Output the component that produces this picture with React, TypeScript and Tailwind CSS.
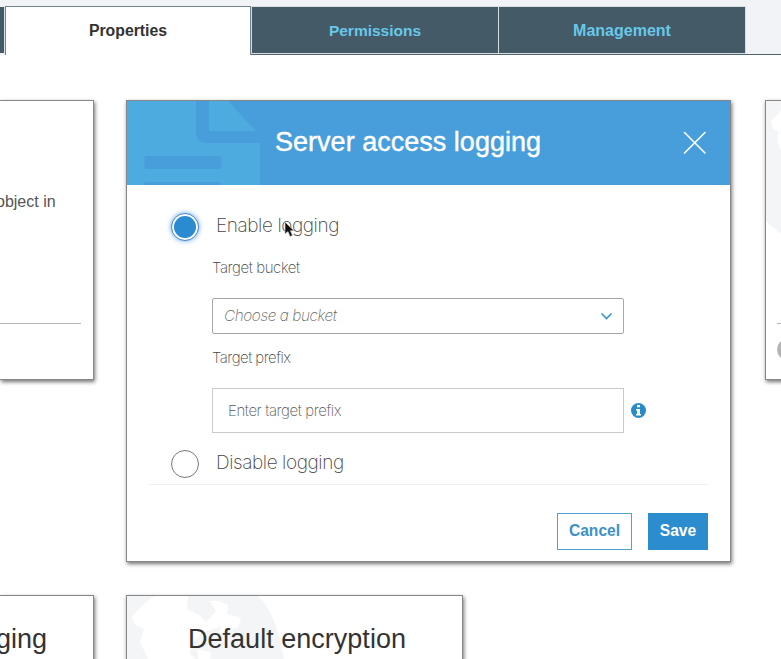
import React from "react";

const cardShadow = "border border-[#858789] bg-white shadow-[1px_2px_4px_rgba(0,0,0,0.55)]";
const thin = "font-['Inter','Liberation_Sans',sans-serif] font-extralight";

function Tabs() {
  return (
    <nav className="flex h-[55px] shrink-0 bg-[#f2f3f6] pt-[6px] text-[17px] font-bold leading-[47px]">
      <div className="mt-px h-[46px] w-[4px] shrink-0 bg-[#455a67]" />
      <div className="h-[49px] w-px shrink-0 bg-[#dce3e7]" />
      <div className="h-[49px] w-[246px] shrink-0 border-x border-t border-[#71838c] bg-white text-center text-[#333]">
        <span className="text-[15.8px]">Properties</span>
      </div>
      <div className="flex grow border-b border-[#53666f]">
        <div className="flex h-[48px] border border-[#d5dde1] bg-[#455a67] text-center text-[#67c8ea]">
          <div className="w-[247px] border-r border-[#d5dde1]">
            <span className="text-[15.5px]">Permissions</span>
          </div>
          <div className="w-[246px]">
            <span className="text-[16px]">Management</span>
          </div>
        </div>
      </div>
    </nav>
  );
}

function Globe({ className }: { className: string }) {
  return (
    <svg className={className} viewBox="0 0 160 170" aria-hidden="true">
      <path d="M0 0H131Q149 15 157 63V170H0Z" fill="#f4f5f7" />
      <path
        d="M28 0Q14 8 5 21L7 28 17 33 13 46 22 65 22 170 44 170 50 145 70 130 86 104 81 80 84 56 70 53 72 66 63 58 65 47 74 38 83 34 95 30 91 37 96 37 111 31 114 22 100 18 101 9 92 5 83 5 89 15 79 26 71 18 60 14 61 0Z"
        fill="white"
      />
      <path d="M131 0Q149 15 157 63L160 63V0Z" fill="white" />
    </svg>
  );
}

function Header() {
  return (
    <header className="relative flex h-[84px] items-center justify-between overflow-hidden bg-[#479eda] pb-[2px] pl-[148px] pr-[24px]">
      <svg className="absolute left-0 top-0" width="133" height="84" viewBox="0 0 133 84" aria-hidden="true">
        <path d="M0 0H69V31Q69 42 80 42H133V84H0Z" fill="#4eabdf" />
        <path d="M82 0H101L129 30H82Z" fill="#4eabdf" />
        <rect x="17.5" y="55" width="77" height="13" rx="2" fill="#479eda" />
        <path d="M17 84V83Q17 81 20 81H91Q94 81 94 83V84Z" fill="#479eda" />
      </svg>
      <h2 className="relative text-[27px] leading-none tracking-[0.02px] text-white [-webkit-text-stroke:0.4px_white]">
        Server access logging
      </h2>
      <svg width="23" height="23" viewBox="0 0 23 23" stroke="white" strokeWidth="1.6" strokeLinecap="round">
        <path d="M1.5 1.5L22 22M22 1.5L1.5 22" />
      </svg>
    </header>
  );
}

function Dialog() {
  return (
    <section className={`${cardShadow} relative h-[462px] w-[605px] shrink-0`}>
      <Header />
      <div className="mx-[22px] flex h-[300px] flex-col border-b border-[#f0f0f0] pl-[22px]">
        <label className="mt-[28px] flex h-[28px] items-center gap-[17px]">
          <span className="grid size-[28px] place-items-center rounded-full border border-[#4486cf] bg-white shadow-[0_0_5px_#69a9ec]">
            <span className="size-[22px] rounded-full bg-[#2a8bd1]" />
          </span>
          <span className={`${thin} -mt-[2px] text-[19px] tracking-[-0.42px] text-[#444]`}>Enable logging</span>
        </label>
        <div className={`${thin} ml-[41px] flex flex-col text-[15px] tracking-[-0.4px] text-[#444]`}>
          <span className="mt-[17px] h-[20px] leading-[20px]">Target bucket</span>
          <div className="mt-[20px] flex h-[36px] w-[412px] items-center justify-between rounded-[2px] border border-[#a4a8ac] pl-[11px] pr-[10px] text-[15.3px] italic text-[#666]">
            <span>Choose a bucket</span>
            <svg width="13" height="9" viewBox="0 0 13 9" fill="none" stroke="#3993cf" strokeWidth="1.6" className="mt-px">
              <path d="M1.5 1.5L6.5 6.5L11.5 1.5" />
            </svg>
          </div>
          <span className="mt-[14px] h-[20px] leading-[20px] tracking-[-0.52px]">Target prefix</span>
          <div className="mt-[20px] flex items-center gap-[7px]">
            <div className="flex h-[45px] w-[412px] items-center border border-[#cacaca] pl-[15px] pt-px text-[15px] text-[#555]">
              Enter target prefix
            </div>
            <svg width="15" height="15" viewBox="0 0 15 15">
              <circle cx="7.5" cy="7.5" r="7.5" fill="#2a8bc9" />
              <path d="M6 2h3v2.3H6zM5 6h4v5h1v1.5H5V11h1V7.5H5z" fill="white" />
            </svg>
          </div>
        </div>
        <label className="mt-[17px] flex h-[28px] items-center gap-[17px]">
          <span className="size-[28px] rounded-full border border-[#777]" />
          <span className={`${thin} -mt-[2px] text-[19px] tracking-[-0.42px] text-[#444]`}>Disable logging</span>
        </label>
      </div>
      <div className="mr-[22px] mt-[28px] flex justify-end gap-[16px] text-[15.6px] font-bold">
        <button className="h-[37px] w-[75px] border border-[#529fd1] pb-px text-[#3c91cb]">Cancel</button>
        <button className="h-[37px] w-[60px] bg-[#2b8dcd] pb-px text-white">Save</button>
      </div>
      <svg className="absolute left-[157px] top-[120px]" width="12" height="17" viewBox="0 0 12 17">
        <path d="M1 1V13L4 10.5L6 15.5L8.5 14.5L6.4 9.7H10Z" fill="#111" stroke="#ddd" strokeWidth=".6" />
      </svg>
    </section>
  );
}

export default function App() {
  return (
    <main className="flex h-[659px] w-[781px] flex-col overflow-hidden bg-white font-['Liberation_Sans',Arial,sans-serif]">
      <Tabs />
      <div className="mt-[45px] flex h-[495px] shrink-0 items-start">
        <section className={`${cardShadow} mr-[32px] h-[280px] w-[94px] shrink-0 border-l-0`}>
          <p className="-ml-[4px] mt-[92px] h-[18px] text-[16px] leading-[18px] text-[#555]">object in</p>
          <div className="mr-[12px] mt-[112px] h-px bg-[#b5b5b5]" />
        </section>
        <Dialog />
        <section className={`${cardShadow} relative ml-[34px] h-[280px] w-[336px] shrink-0 overflow-hidden`}>
          <svg className="h-[170px] w-[160px]" viewBox="0 0 160 170" aria-hidden="true">
            <path d="M0 0H160V170H80Q30 148 0 120Z" fill="#f4f5f7" />
            <path d="M28 0Q14 8 5 21L7 28 17 33 12 32Q10 42 16 51L30 60V0Z" fill="white" />
          </svg>
          <div className="ml-[11px] mt-[52px] h-px bg-[#b5b5b5]" />
          <div className="ml-[11px] mt-[15px] size-[21px] rounded-full bg-[#b4b4b4]" />
        </section>
      </div>
      <div className="flex h-[80px] shrink-0 items-start text-[27px] leading-[32px] text-[#333]">
        <section className={`${cardShadow} mr-[32px] flex h-[280px] w-[94px] shrink-0 justify-end border-l-0 pr-[46px] pt-[27px]`}>
          <span>Logging</span>
        </section>
        <section className={`${cardShadow} relative h-[280px] w-[337px] shrink-0`}>
          <Globe className="absolute left-0 top-0 h-[170px] w-[160px]" />
          <h2 className="relative ml-[61px] mt-[27px] whitespace-nowrap tracking-[0.02px]">Default encryption</h2>
        </section>
      </div>
    </main>
  );
}
